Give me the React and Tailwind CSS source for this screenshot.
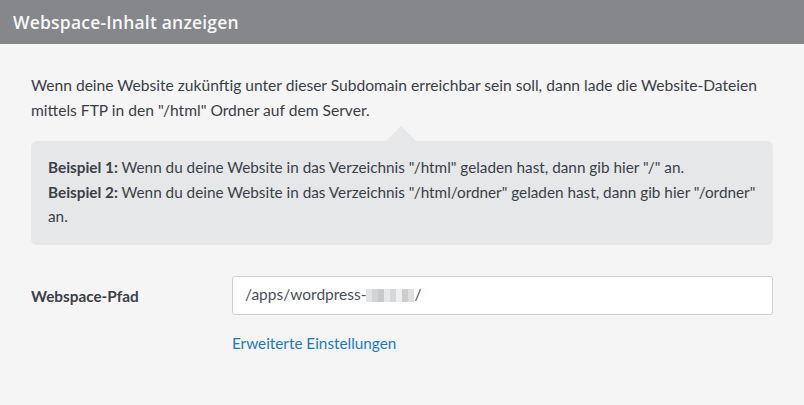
export default function App() {
  const blur = ["#e2e3e5", "#d3d4d7", "#c8c9cc", "#e6e7e9", "#d6d7da", "#eeeeef", "#cbccd0", "#dedfe1"];
  return (
    <div className="w-[804px] h-[405px] bg-[#f5f5f5] overflow-hidden" style={{ fontFamily: "Lato, 'Noto Sans', sans-serif" }}>
      <div className="h-[44px] bg-[#85878b] flex items-center pl-[13px]">
        <h1 className="text-[17.5px] font-semibold text-[#f7f7f7] tracking-[0.2px]" style={{ fontFamily: "'Open Sans', sans-serif" }}>Webspace-Inhalt anzeigen</h1>
      </div>
      <div className="px-[31px] pt-[29px]">
        <p className="text-[15.6px] leading-[25px] text-[#3a3f47]">
          Wenn deine Website zukünftig unter dieser Subdomain erreichbar sein soll, dann lade die Website-Dateien mittels FTP in den "/html" Ordner auf dem Server.
        </p>
        <div className="relative mt-[18px] w-[742px] bg-[#e6e7e9] rounded-[6px] pl-[17px] pr-[10px] pt-[14px] pb-[16px] text-[15.3px] leading-[24.5px] text-[#3a3f47]">
          <div className="absolute -top-[15px] left-[355px] w-0 h-0 border-l-[15px] border-r-[15px] border-b-[15px] border-l-transparent border-r-transparent border-b-[#e6e7e9]"></div>
          <p><b>Beispiel 1:</b> Wenn du deine Website in das Verzeichnis "/html" geladen hast, dann gib hier "/" an.</p>
          <p><b>Beispiel 2:</b> Wenn du deine Website in das Verzeichnis "/html/ordner" geladen hast, dann gib hier "/ordner" an.</p>
        </div>
        <div className="mt-[31px] flex">
          <label className="w-[201px] pt-[9px] text-[15.3px] font-bold text-[#3a3f47]">Webspace-Pfad</label>
          <div className="flex flex-col">
            <div className="w-[541px] h-[39px] bg-white border border-[#cfd0d2] rounded-[3px] flex items-center pl-[12px] text-[15.5px] text-[#4a4f57]">
              <span>/apps/wordpress-</span>
              <span className="flex h-[13px]">
                {blur.map((c, i) => (
                  <span key={i} className="w-[6px] h-[13px]" style={{ backgroundColor: c }}></span>
                ))}
              </span>
              <span>/</span>
            </div>
            <a className="mt-[17px] text-[15.3px] text-[#1b7bbf]" href="#">Erweiterte Einstellungen</a>
          </div>
        </div>
      </div>
    </div>
  );
}
